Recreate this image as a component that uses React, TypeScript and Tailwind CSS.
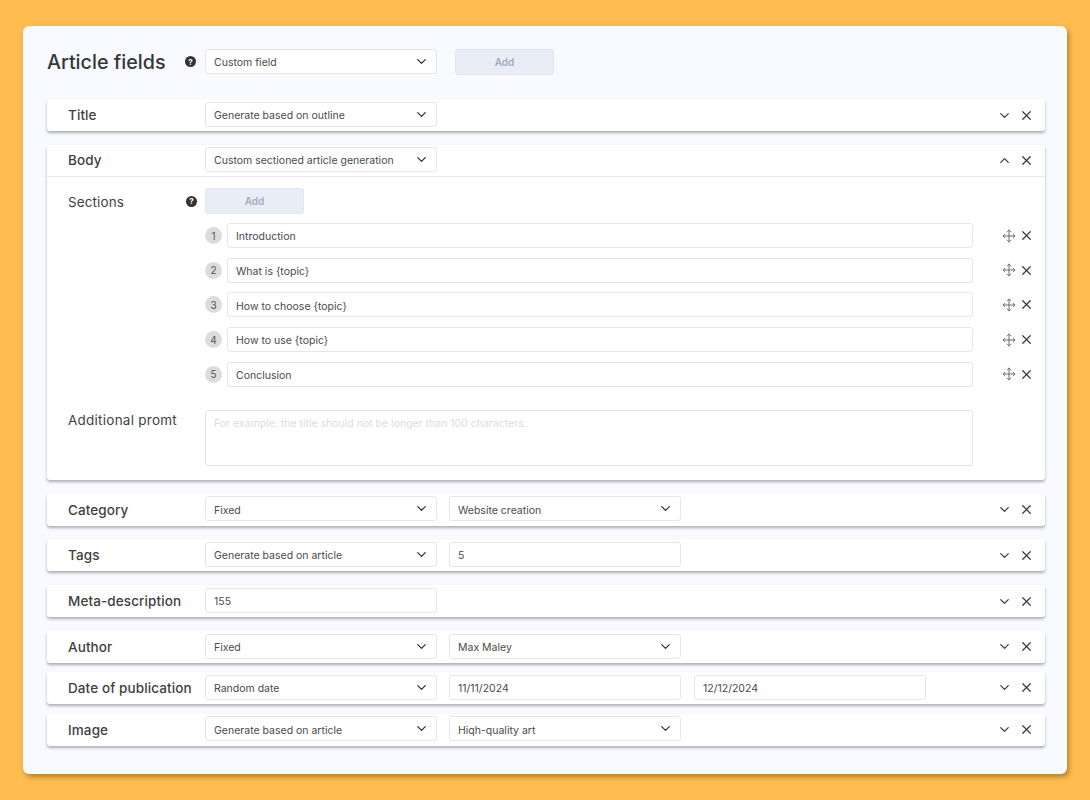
import { ChevronDown, ChevronUp, Move, X } from "lucide-react";

function Help() {
  return (
    <span className="flex h-[11px] w-[11px] shrink-0 items-center justify-center rounded-full bg-[#333333] text-[8px] leading-none font-bold text-white">
      ?
    </span>
  );
}

function Select({ value }: { value: string }) {
  return (
    <div className="flex h-[25px] w-[232px] shrink-0 items-center justify-between rounded-[3px] border border-[#e6e6e6] bg-white pr-[7px] pl-2 text-[10.5px] text-[#4a4a4a]">
      <span className="pt-[3px]">{value}</span>
      <ChevronDown size={15} strokeWidth={2} className="text-[#333333]" />
    </div>
  );
}

function Field({ value }: { value: string }) {
  return (
    <div className="flex h-[25px] w-[232px] shrink-0 items-center rounded-[3px] border border-[#e6e6e6] bg-white pt-[3px] pl-2 text-[10.5px] text-[#4a4a4a]">
      {value}
    </div>
  );
}

function AddButton() {
  return (
    <div className="flex h-[26px] w-[99px] items-center justify-center rounded-[3px] border border-[#e1e6f0] bg-[#e9edf5] text-[10px] font-semibold text-[#a3aac4]">
      Add
    </div>
  );
}

function Actions({ open = false }: { open?: boolean }) {
  return (
    <div className="ml-auto flex items-center gap-[7px] pr-[11px] text-[#3c3c3c]">
      {open ? (
        <ChevronUp size={15} strokeWidth={2} />
      ) : (
        <ChevronDown size={15} strokeWidth={2} />
      )}
      <X size={15} strokeWidth={2} />
    </div>
  );
}

function Row({
  label,
  children,
}: {
  label: string;
  children: React.ReactNode;
}) {
  return (
    <div className="flex h-[32px] items-center rounded-[3px] bg-white pl-[21px] shadow-[0_2px_3px_rgba(70,70,80,0.42)]">
      <div className="w-[137px] shrink-0 text-[13.5px] font-medium tracking-[0.1px] text-[#3f3f3f]">
        {label}
      </div>
      <div className="mb-[1.5px] flex gap-3">{children}</div>
      <Actions />
    </div>
  );
}

const sections = [
  "Introduction",
  "What is {topic}",
  "How to choose {topic}",
  "How to use {topic}",
  "Conclusion",
];

export default function App() {
  return (
    <div className="h-[800px] overflow-hidden bg-[#ffbc50] px-[23px] pt-[26px] font-['Inter',sans-serif]">
      <div className="h-[748px] rounded-[6px] bg-[#f9faff] pt-[23px] pr-[22px] pl-[24px] shadow-[2px_3px_5px_rgba(120,80,10,0.55)]">
        <div className="flex h-[26px] items-start">
          <h1 className="w-[138px] shrink-0 text-[19.7px] leading-[26px] font-medium text-[#363636]">
            Article fields
          </h1>
          <div className="pt-[7px]">
            <Help />
          </div>
          <div className="ml-[9px]">
            <Select value="Custom field" />
          </div>
          <div className="ml-[18px]">
            <AddButton />
          </div>
        </div>

        <div className="mt-[24px] flex flex-col">
          <Row label="Title">
            <Select value="Generate based on outline" />
          </Row>

          <div className="mt-[14px] h-[334.7px] rounded-[3px] bg-white shadow-[0_2px_3px_rgba(70,70,80,0.42)]">
            <div className="flex h-[32px] items-center border-b border-[#e8e9ee] pl-[21px]">
              <div className="w-[137px] shrink-0 text-[13.5px] font-medium tracking-[0.1px] text-[#3f3f3f]">
                Body
              </div>
              <div className="mb-[1.5px]">
                <Select value="Custom sectioned article generation" />
              </div>
              <Actions open />
            </div>

            <div className="flex pt-[11px] pl-[21px]">
              <div className="flex h-[26px] w-[137px] shrink-0 items-center justify-between pr-2">
                <span className="pt-[2px] text-[13.5px] tracking-[0.1px] text-[#3f3f3f]">
                  Sections
                </span>
                <Help />
              </div>
              <AddButton />
            </div>

            <div className="mt-[9px] flex flex-col gap-[9.7px] pr-[11px] pl-[158px]">
              {sections.map((name, i) => (
                <div key={name} className="flex items-center">
                  <span className="flex h-[17px] w-[17px] shrink-0 items-center justify-center rounded-full bg-[#dcdcdc] pt-px text-[10px] text-[#555555]">
                    {i + 1}
                  </span>
                  <div className="ml-[5px] flex h-[25px] w-[746px] items-center rounded-[3px] border border-[#e6e6e6] bg-white pt-[3px] pl-2 text-[10.5px] text-[#4a4a4a]">
                    {name}
                  </div>
                  <div className="ml-auto flex items-center gap-[3.5px] text-[#3c3c3c]">
                    <Move size={14} strokeWidth={1.5} className="text-[#5a5a5a]" />
                    <X size={15} strokeWidth={2} />
                  </div>
                </div>
              ))}
            </div>

            <div className="mt-[23px] flex pl-[21px]">
              <div className="w-[137px] shrink-0 text-[13.5px] tracking-[0.25px] text-[#3f3f3f]">
                Additional promt
              </div>
              <div className="h-[56px] w-[768px] rounded-[3px] border border-[#e6e6e6] bg-white pt-[5px] pl-2 text-[10.5px] text-[#dcdcdc]">
                For example: the title should not be longer than 100 characters.
              </div>
            </div>
          </div>

          <div className="mt-[14px] flex flex-col gap-[13.7px]">
            <Row label="Category">
              <Select value="Fixed" />
              <Select value="Website creation" />
            </Row>
            <Row label="Tags">
              <Select value="Generate based on article" />
              <Field value="5" />
            </Row>
            <Row label="Meta-description">
              <Field value="155" />
            </Row>
            <Row label="Author">
              <Select value="Fixed" />
              <Select value="Max Maley" />
            </Row>
          </div>

          <div className="mt-[9px] flex flex-col gap-[9.9px]">
            <Row label="Date of publication">
              <Select value="Random date" />
              <Field value="11/11/2024" />
              <div className="ml-px">
                <Field value="12/12/2024" />
              </div>
            </Row>
            <Row label="Image">
              <Select value="Generate based on article" />
              <Select value="Hiqh-quality art" />
            </Row>
          </div>
        </div>
      </div>
    </div>
  );
}
